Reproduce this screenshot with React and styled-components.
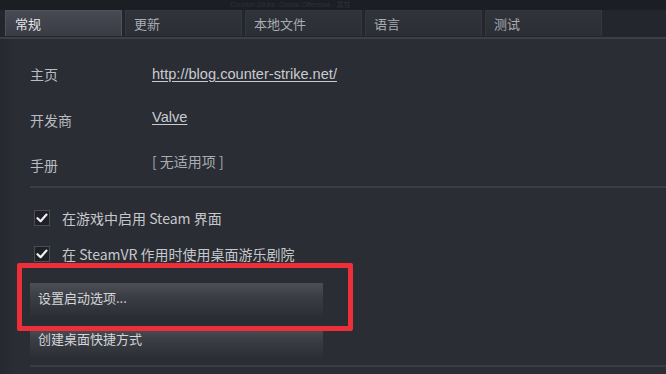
import styled, { createGlobalStyle } from "styled-components";

const GlobalStyle = createGlobalStyle`
  html, body {
    margin: 0;
    padding: 0;
    background: #1c1e23;
  }
  body {
    font-family: "Noto Sans CJK SC", "Liberation Sans", Arial, sans-serif;
    color: #c4c6ca;
  }
`;

const Window = styled.div`
  width: 666px;
  height: 374px;
  overflow: hidden;
  display: flex;
  flex-direction: column;
  background: #2a2d34;
`;

const TitleStrip = styled.div`
  height: 10px;
  background: #1c1e23;
  padding-left: 230px;
  font-family: "Liberation Sans", "Noto Sans CJK SC", sans-serif;
  font-size: 7px;
  line-height: 10px;
  color: #2e3137;
  white-space: nowrap;
`;

const TabBar = styled.div`
  display: flex;
  gap: 3px;
  padding: 0 0 0 5px;
  height: 27px;
  background: #23262c;
  border-bottom: 2px solid #3c3f46;
`;

const Tab = styled.div`
  width: 117px;
  height: 26px;
  box-sizing: border-box;
  padding-left: ${(p) => (p.$active ? "9px" : "8px")};
  font-size: 13px;
  line-height: 26px;
  color: ${(p) => (p.$active ? "#e4e5e8" : "#a9acb2")};
  background: ${(p) =>
    p.$active
      ? "linear-gradient(#474a53, #393c44)"
      : "linear-gradient(#30333a, #2b2e35)"};
  border: 1px solid ${(p) => (p.$active ? "#50535c" : "#34373e")};
  border-bottom: none;
`;

const Panel = styled.div`
  flex: 1;
  position: relative;
  padding: 0 0 0 30px;
  background: linear-gradient(90deg, #25282e 0, #2a2d34 16px);
`;

const InfoRow = styled.div`
  display: grid;
  grid-template-columns: 122px 1fr;
  align-items: center;
  height: 44px;
  font-size: 14px;
  &:first-child {
    margin-top: 13px;
  }
`;

const Label = styled.span`
  color: #b9bcc1;
  transform: translateY(${(p) => p.$dy || 0}px);
`;

const Link = styled.span`
  font-family: "Liberation Sans", Arial, sans-serif;
  font-size: 14.6px;
  color: #c9cbcf;
  text-decoration: underline;
  text-underline-offset: 2px;
  transform: translateY(${(p) => p.$dy || 0}px);
`;

const Muted = styled.span`
  color: #a9acb2;
  font-size: 14px;
  transform: translateY(${(p) => p.$dy || 0}px);
`;

const Separator = styled.div`
  height: 2px;
  background: #3a3d44;
  margin: ${(p) => p.$margin || "0"};
`;

const CheckRow = styled.div`
  display: flex;
  align-items: center;
  gap: 12px;
  height: 36px;
  padding-left: 4px;
  font-size: 14px;
  color: #c6c8cc;
`;

const Box = styled.span`
  width: 16px;
  height: 16px;
  box-sizing: border-box;
  background: #1f2126;
  border: 1px solid #4a4d55;
  display: flex;
  align-items: center;
  justify-content: center;
`;

const Button = styled.div`
  width: 293px;
  height: ${(p) => p.$h || 33}px;
  box-sizing: border-box;
  padding-left: 8px;
  font-size: 13px;
  line-height: ${(p) => p.$lh || 30}px;
  color: #d4d6d9;
  background: linear-gradient(#4c4f57 0, #3b3e45 40%, #2c2f35 100%);
  margin-top: ${(p) => p.$mt || 0}px;
`;

const Highlight = styled.div`
  position: absolute;
  left: 17px;
  top: 224px;
  width: 336px;
  height: 68px;
  box-sizing: border-box;
  border: 5px solid #ec2f38;
  border-radius: 2px;
  pointer-events: none;
`;

function Check() {
  return (
    <Box>
      <svg width="12" height="12" viewBox="0 0 12 12">
        <path d="M1.5 6.2 L4.6 9.2 L10.5 2.6" fill="none" stroke="#f2f2f2" strokeWidth="2.2" strokeLinecap="round" strokeLinejoin="round" />
      </svg>
    </Box>
  );
}

const tabs = ["常规", "更新", "本地文件", "语言", "测试"];

export default function App() {
  return (
    <>
      <GlobalStyle />
      <Window>
        <TitleStrip>Counter-Strike: Global Offensive - 属性</TitleStrip>
        <TabBar>
          {tabs.map((t, i) => (
            <Tab key={t} $active={i === 0}>
              {t}
            </Tab>
          ))}
        </TabBar>
        <Panel>
          <InfoRow>
            <Label>主页</Label>
            <Link>http://blog.counter-strike.net/</Link>
          </InfoRow>
          <InfoRow>
            <Label $dy={2}>开发商</Label>
            <Link $dy={-1}>Valve</Link>
          </InfoRow>
          <InfoRow>
            <Label $dy={3}>手册</Label>
            <Muted $dy={-1}>[ 无适用项 ]</Muted>
          </InfoRow>
          <Separator $margin="2px 0 12px 0" />
          <CheckRow>
            <Check />
            在游戏中启用 Steam 界面
          </CheckRow>
          <CheckRow>
            <Check />
            在 SteamVR 作用时使用桌面游乐剧院
          </CheckRow>
          <Button $mt={11} $h={33}>设置启动选项...</Button>
          <Button $mt={11} $h={30} $lh={24}>创建桌面快捷方式</Button>
          <Separator $margin="8px 0 0 0" />
          <Highlight />
        </Panel>
      </Window>
    </>
  );
}
